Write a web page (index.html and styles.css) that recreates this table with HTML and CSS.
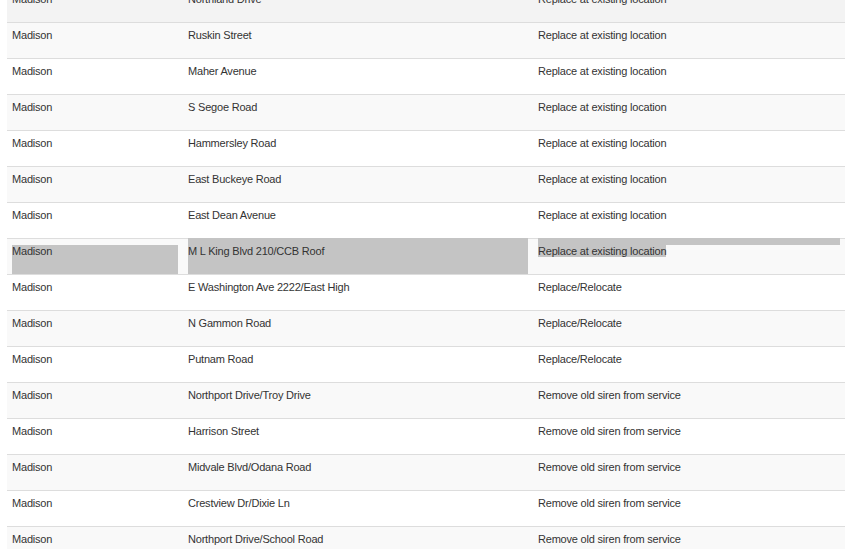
FILE: index.html
```html
<!DOCTYPE html>
<html>
  <head>
    <title>Siren replacement list</title>
    <meta http-equiv="Content-Type" content="text/html; charset=UTF-8"/>
    <link rel="stylesheet" href="styles.css">
  </head>
  <body>
    <div class="sirens">
      <div class="row hover">
        <div class="cell">Madison</div>
        <div class="cell">Northland Drive</div>
        <div class="cell">Replace at existing location</div>
      </div>
      <div class="row">
        <div class="cell">Madison</div>
        <div class="cell">Ruskin Street</div>
        <div class="cell">Replace at existing location</div>
      </div>
      <div class="row">
        <div class="cell">Madison</div>
        <div class="cell">Maher Avenue</div>
        <div class="cell">Replace at existing location</div>
      </div>
      <div class="row">
        <div class="cell">Madison</div>
        <div class="cell">S Segoe Road</div>
        <div class="cell">Replace at existing location</div>
      </div>
      <div class="row">
        <div class="cell">Madison</div>
        <div class="cell">Hammersley Road</div>
        <div class="cell">Replace at existing location</div>
      </div>
      <div class="row">
        <div class="cell">Madison</div>
        <div class="cell">East Buckeye Road</div>
        <div class="cell">Replace at existing location</div>
      </div>
      <div class="row">
        <div class="cell">Madison</div>
        <div class="cell">East Dean Avenue</div>
        <div class="cell">Replace at existing location</div>
      </div>
      <div class="row selected">
        <div class="cell sel-content">Madison</div>
        <div class="cell sel-full"><div class="sel-fill">M L King Blvd 210/CCB Roof</div></div>
        <div class="cell sel-text"><div class="sel-bar"></div><span class="sel-line">Replace at existing location</span></div>
      </div>
      <div class="row">
        <div class="cell">Madison</div>
        <div class="cell">E Washington Ave 2222/East High</div>
        <div class="cell">Replace/Relocate</div>
      </div>
      <div class="row">
        <div class="cell">Madison</div>
        <div class="cell">N Gammon Road</div>
        <div class="cell">Replace/Relocate</div>
      </div>
      <div class="row">
        <div class="cell">Madison</div>
        <div class="cell">Putnam Road</div>
        <div class="cell">Replace/Relocate</div>
      </div>
      <div class="row">
        <div class="cell">Madison</div>
        <div class="cell">Northport Drive/Troy Drive</div>
        <div class="cell">Remove old siren from service</div>
      </div>
      <div class="row">
        <div class="cell">Madison</div>
        <div class="cell">Harrison Street</div>
        <div class="cell">Remove old siren from service</div>
      </div>
      <div class="row">
        <div class="cell">Madison</div>
        <div class="cell">Midvale Blvd/Odana Road</div>
        <div class="cell">Remove old siren from service</div>
      </div>
      <div class="row">
        <div class="cell">Madison</div>
        <div class="cell">Crestview Dr/Dixie Ln</div>
        <div class="cell">Remove old siren from service</div>
      </div>
      <div class="row">
        <div class="cell">Madison</div>
        <div class="cell">Northport Drive/School Road</div>
        <div class="cell">Remove old siren from service</div>
      </div>
    </div>
  </body>
</html>
```

FILE: styles.css
```css
html, body {
  margin: 0;
  background: #fff;
  overflow: hidden;
}
body {
  font-family: 'Liberation Sans', Arial, sans-serif;
  font-size: 11px;
  letter-spacing: -0.2px;
  color: #333;
}

.sirens {
  margin: -14px 9px 0 7px;
}

.row {
  display: grid;
  grid-template-columns: 176px 350px 1fr;
  height: 36px;
  box-sizing: border-box;
  border-top: 1px solid #ddd;
}
.row:nth-child(even) {
  background-color: #f9f9f9;
}
.row.hover {
  background-color: #f3f3f3;
}

.cell {
  padding: 6px 5px 0;
  line-height: 13px;
  white-space: nowrap;
}

/* leftover text selection on one row */
.sel-content {
  background-color: #c4c4c4;
  background-clip: content-box;
}
.sel-full,
.sel-text {
  padding-top: 0;
}
.sel-fill {
  margin-top: -1px;
  padding-top: 7px;
  height: 36px;
  box-sizing: border-box;
  background-color: #c4c4c4;
}
.sel-bar {
  margin-top: -1px;
  height: 7px;
  background-color: #c4c4c4;
}
.sel-line {
  background-color: #c4c4c4;
}
```
